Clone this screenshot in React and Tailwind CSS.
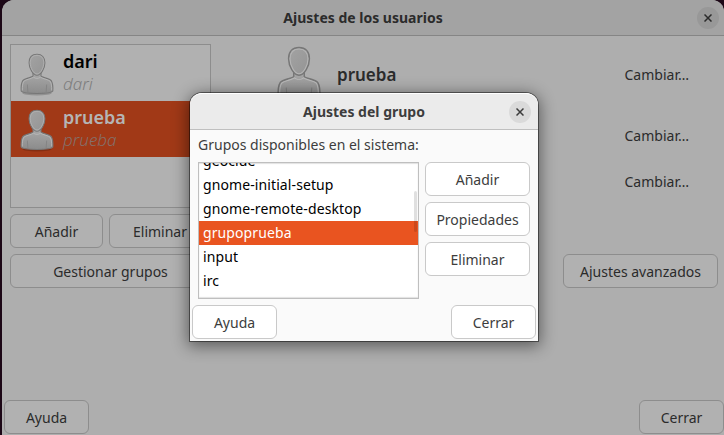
import React from "react";

function Button({ children, className = "", dim = false }) {
  const tone = dim
    ? "border-[#8d8d8d] bg-[#b1b1b1] text-[#2b2b2b]"
    : "border-[#c9c9c9] bg-white text-[#3d3d3d]";
  return (
    <button
      className={`flex h-[34px] shrink-0 items-center justify-center whitespace-nowrap rounded-[6px] border ${tone} ${className}`}
    >
      {children}
    </button>
  );
}

function Close({ className }) {
  return (
    <button className={`flex size-[22px] items-center justify-center rounded-full ${className}`}>
      <svg width="8" height="8" viewBox="0 0 8 8" fill="none" stroke="currentColor" strokeWidth="1.5">
        <path d="M.5.5l7 7M7.5.5l-7 7" />
      </svg>
    </button>
  );
}

function Avatar({ id, className }) {
  return (
    <svg className={className} viewBox="0 0 34 44">
      <defs>
        <linearGradient id={`${id}-body`} x1="0" y1="0" x2="0" y2="1">
          <stop offset="0" stopColor="#aaaaaa" />
          <stop offset="1" stopColor="#8b8b8b" />
        </linearGradient>
        <linearGradient id={`${id}-face`} x1="0" y1="0" x2="1" y2="1">
          <stop offset="0" stopColor="#a3a3a3" />
          <stop offset="1" stopColor="#949494" />
        </linearGradient>
      </defs>
      <ellipse cx="17" cy="40.2" rx="14.5" ry="2.2" fill="#000" opacity=".18" />
      <path
        d="M13 19v4.2c-1 1.3-8.500 2.300-10.200 4.400C1.300 30 1 34.500 1.200 38c1.800 3.300 29.800 3.300 31.600 0 .2-3.500-.1-8-1.600-10.400C29.500 25.500 22 24.500 21 23.200V19z"
        fill={`url(#${id}-body)`}
        stroke="#777"
        strokeWidth="1.100"
      />
      <path d="M2.300 37.500c0-4 .2-7.200 1.500-9.200 1.400-1.700 8.200-2.700 9.700-4.100 2 1.600 5 1.600 7 0 1.500 1.400 8.300 2.400 9.700 4.100 1.300 2 1.500 5.200 1.500 9.200" fill="none" stroke="#bbb" strokeWidth=".8" />
      <path d="M7.300 31.500l.6 7.500M26.700 31.500l-.6 7.500" stroke="#808080" strokeWidth=".8" />
      <path
        d="M17 1.200c-5 0-7.900 3.300-7.900 8.500 0 5.500 3.800 12.500 7.900 12.500s7.900-7 7.900-12.500c0-5.200-2.900-8.500-7.900-8.500z"
        fill={`url(#${id}-face)`}
        stroke="#777"
        strokeWidth="1.100"
      />
      <path d="M17 2.300c-4.300 0-6.800 2.800-6.800 7.400 0 5 3.400 11.300 6.800 11.300s6.800-6.300 6.800-11.300c0-4.600-2.500-7.400-6.800-7.400z" fill="none" stroke="#b5b5b5" strokeWidth=".8" />
    </svg>
  );
}

function UserRow({ name, selected }) {
  return (
    <div className={`flex h-14 pl-[9px] ${selected ? "bg-[#a13917] text-[#b5b5b5]" : "text-black"}`}>
      <Avatar id={`${name}-row`} className="mt-[8px] h-[44px] w-[34px]" />
      <div className="ml-[9px] pt-[5px]">
        <div className="h-[22px] text-[18px] leading-[22px] font-semibold">{name}</div>
        <div className={`h-[22px] text-[17px] leading-[23px] font-light italic ${selected ? "text-[#85706a]" : "text-[#7d7d7d]"}`}>
          {name}
        </div>
      </div>
    </div>
  );
}

const groups = [
  { name: "geoclue", spacing: "tracking-[0.1px]" },
  { name: "gnome-initial-setup", spacing: "tracking-[0.1px]" },
  { name: "gnome-remote-desktop", spacing: "tracking-[0.1px]" },
  { name: "grupoprueba", spacing: "tracking-[0.1px]" },
  { name: "input", spacing: "tracking-[0.1px]" },
  { name: "irc", spacing: "tracking-[0.1px]" },
];

function GroupDialog() {
  return (
    <div className="absolute top-[93px] left-[190px] flex h-[248px] w-[348px] flex-col rounded-t-[12px] bg-[#fafafa] text-[#3d3d3d] shadow-[0_0_0_1px_rgba(0,0,0,0.45),0_3px_16px_2px_rgba(0,0,0,0.48)]">
      <header className="flex h-[37px] items-center rounded-t-[12px] border-t border-b border-t-white border-b-[#bfbfbf] bg-[#ebebeb] pr-[7px] pl-[29px]">
        <h2 className="flex-1 text-center text-[14px] font-bold">Ajustes del grupo</h2>
        <Close className="bg-[#dadada]" />
      </header>
      <div className="flex h-[32px] items-center px-2 pb-[3px] whitespace-nowrap">Grupos disponibles en el sistema:</div>
      <div className="flex gap-[6px] pl-2">
        <div className="flex h-[137px] w-[221px] flex-col border border-[#bfbfbf] bg-white text-black">
          <div className="relative h-[135px] overflow-hidden shadow-[inset_0_1px_1px_#e2e2e2,inset_0_-1px_1px_#e2e2e2]">
            <div className="-mt-[14px]">
              {groups.map((g) => (
                <div
                  key={g.name}
                  className={`h-6 pl-1 leading-[23px] ${g.spacing} ${g.name === "grupoprueba" ? "bg-[#e95420] text-white" : ""}`}
                >
                  {g.name}
                </div>
              ))}
            </div>
            <div className="absolute top-[28px] right-px h-[41px] w-[3px] rounded-full bg-black/12" />
          </div>
        </div>
        <div className="flex w-[105px] flex-col gap-[6px]">
          <Button>Añadir</Button>
          <Button>Propiedades</Button>
          <Button>Eliminar</Button>
        </div>
      </div>
      <div className="mt-[6px] flex justify-between px-[2px]">
        <Button className="w-[85px]">Ayuda</Button>
        <Button className="w-[85px]">Cerrar</Button>
      </div>
    </div>
  );
}

export default function App() {
  return (
    <div className="relative h-[435px] w-[724px] overflow-hidden bg-[#1c0716] pl-[2px] font-['Noto_Sans',sans-serif] text-[14px]">
      <div className="flex h-full flex-col rounded-t-[12px] bg-[#aeaeae] text-[#2b2b2b]">
        <header className="flex h-[36px] items-center rounded-t-[12px] border-b border-[#858585] bg-[#a3a3a3] pr-[5px] pl-[27px]">
          <h1 className="flex-1 text-center text-[14px] font-bold">Ajustes de los usuarios</h1>
          <Close className="bg-[#989898]" />
        </header>
        <main className="flex flex-1 pt-2 pr-[6px] pl-2">
          <section className="w-[201px]">
            <div className="h-[164px] border border-[#8d8d8d] bg-[#b1b1b1]">
              <UserRow name="dari" />
              <UserRow name="prueba" selected />
            </div>
            <div className="mt-[6px] flex gap-[6px]">
              <Button dim className="w-[93px]">Añadir</Button>
              <Button dim className="flex-1">Eliminar</Button>
            </div>
            <Button dim className="mt-[6px] w-full">Gestionar grupos</Button>
          </section>
          <section className="flex flex-1 justify-between pl-[65px]">
            <div className="flex items-start">
              <Avatar id="current" className="mt-[2px] h-[58px] w-[46px]" />
              <div className="ml-[15px] pt-[20px] text-[17px] leading-[22px] font-semibold">prueba</div>
            </div>
            <div className="flex flex-col items-end">
              <div className="mt-[21px] mr-[29px] leading-5">Cambiar…</div>
              <div className="mt-[41px] mr-[29px] leading-5">Cambiar…</div>
              <div className="mt-[26px] mr-[29px] leading-5">Cambiar…</div>
              <Button dim className="mt-[62px] w-[155px]">Ajustes avanzados</Button>
            </div>
          </section>
        </main>
        <footer className="flex justify-between pb-px pl-[2px]">
          <Button dim className="w-[85px]">Ayuda</Button>
          <Button dim className="w-[85px]">Cerrar</Button>
        </footer>
      </div>
      <GroupDialog />
    </div>
  );
}
